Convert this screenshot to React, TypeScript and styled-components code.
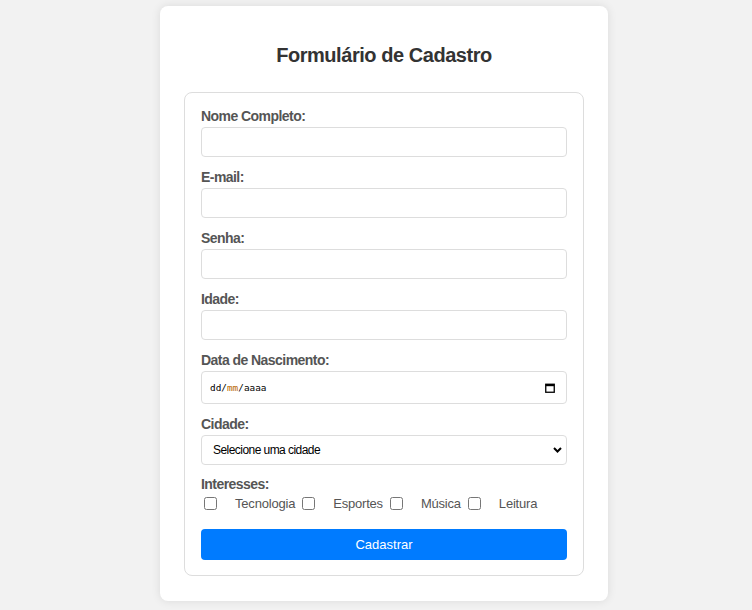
import styled, { createGlobalStyle } from "styled-components";

const GlobalStyle = createGlobalStyle`
    body {
        margin: 0;
        background-color: #f2f2f2;
        font-family: "Liberation Sans", Arial, sans-serif;
    }
`;

export default function App() {
    const textFields = [
        { id: "nome", label: "Nome Completo:", type: "text" },
        { id: "email", label: "E-mail:", type: "email" },
        { id: "senha", label: "Senha:", type: "password" },
        { id: "idade", label: "Idade:", type: "number" },
    ];

    const interesses = ["Tecnologia", "Esportes", "Música", "Leitura"];

    return (
        <Page>
            <GlobalStyle />
            <Card>
                <Title>Formulário de Cadastro</Title>
                <Form onSubmit={e => e.preventDefault()}>
                    {
                        textFields.map(field => (
                            <div key={field.id}>
                                <Label htmlFor={field.id}>{field.label}</Label>
                                <Input id={field.id} type={field.type} />
                            </div>
                        ))
                    }

                    <Label htmlFor="nascimento">Data de Nascimento:</Label>
                    <DateField id="nascimento" tabIndex={0}>
                        <DateText>
                            dd/<Month>mm</Month>/aaaa
                        </DateText>
                        <svg width="10" height="10" viewBox="0 0 10 10">
                            <rect x="0.75" y="1.25" width="8.5" height="8" fill="none" stroke="#000" strokeWidth="1.3" />
                            <rect x="0.75" y="1" width="8.5" height="2.2" fill="#000" />
                        </svg>
                    </DateField>

                    <Label htmlFor="cidade">Cidade:</Label>
                    <SelectWrap>
                        <Select id="cidade" defaultValue="">
                            <option value="">Selecione uma cidade</option>
                            <option value="sp">São Paulo</option>
                            <option value="rj">Rio de Janeiro</option>
                            <option value="bh">Belo Horizonte</option>
                        </Select>
                        <Chevron width="9" height="6" viewBox="0 0 9 6">
                            <path d="M1 1 L4.5 4.5 L8 1" fill="none" stroke="#000" strokeWidth="2" />
                        </Chevron>
                    </SelectWrap>

                    <Label>Interesses:</Label>
                    <CheckRow>
                        {
                            interesses.map(item => (
                                <CheckItem key={item}>
                                    <Checkbox type="checkbox" value={item} />
                                    <CheckText>{item}</CheckText>
                                </CheckItem>
                            ))
                        }
                    </CheckRow>

                    <Button type="submit">Cadastrar</Button>
                </Form>
            </Card>
        </Page>
    );
}

const Page = styled.div`
    display: flex;
    justify-content: center;
    align-items: flex-start;
    min-height: 100vh;
    padding: 6px 0 0 16px;
    box-sizing: border-box;
`;

const Card = styled.div`
    width: 448px;
    box-sizing: border-box;
    padding: 24px 24px 25px;
    background-color: #fff;
    border-radius: 8px;
    box-shadow: 0 0 10px rgba(0, 0, 0, 0.1);
`;

const Title = styled.h2`
    margin: 14px 0 25px;
    font-size: 20px;
    line-height: 23px;
    letter-spacing: -0.45px;
    text-align: center;
    color: #333;
`;

const Form = styled.form`
    display: flex;
    flex-direction: column;
    padding: 15px 16px;
    border: 1px solid #ddd;
    border-radius: 8px;
`;

const Label = styled.label`
    display: block;
    margin-bottom: 3px;
    font-size: 14px;
    line-height: 16px;
    font-weight: bold;
    letter-spacing: -0.55px;
    color: #555;
`;

const Input = styled.input`
    display: block;
    width: 100%;
    height: 30px;
    box-sizing: border-box;
    margin: 0 0 12px;
    padding: 6px 8px;
    border: 1px solid #ddd;
    border-radius: 4px;
    font-size: 14px;
    outline: none;
`;

const DateField = styled.div`
    display: flex;
    align-items: center;
    justify-content: space-between;
    height: 33px;
    box-sizing: border-box;
    margin-bottom: 12px;
    padding: 0 11px 0 8px;
    border: 1px solid #ddd;
    border-radius: 4px;
    background-color: #fff;
`;

const DateText = styled.span`
    font-family: "DejaVu Sans Mono", "Liberation Mono", monospace;
    font-size: 9.4px;
    color: #000;
`;

const Month = styled.span`
    color: #b86800;
`;

const SelectWrap = styled.div`
    position: relative;
    margin-bottom: 11px;
`;

const Select = styled.select`
    display: block;
    width: 100%;
    height: 30px;
    box-sizing: border-box;
    margin: 0;
    padding: 0 24px 0 11px;
    border: 1px solid #ddd;
    border-radius: 4px;
    background-color: #fff;
    appearance: none;
    font-family: "Liberation Sans", Arial, sans-serif;
    font-size: 12px;
    letter-spacing: -0.55px;
    color: #000;
    outline: none;
`;

const Chevron = styled.svg`
    position: absolute;
    right: 5px;
    top: 12px;
    pointer-events: none;
`;

const CheckRow = styled.div`
    display: flex;
    flex-wrap: wrap;
    align-items: center;
    height: 16px;
`;

const CheckItem = styled.label`
    display: flex;
    align-items: center;
`;

const Checkbox = styled.input`
    width: 13px;
    height: 13px;
    margin: 0 18px 0 3px;
`;

const CheckText = styled.span`
    margin-right: 4px;
    font-size: 13px;
    letter-spacing: -0.2px;
    color: #555;
`;

const Button = styled.button`
    height: 31px;
    margin-top: 18px;
    padding: 0;
    border: none;
    border-radius: 4px;
    background-color: #007bff;
    color: #fff;
    font-family: "Liberation Sans", Arial, sans-serif;
    font-size: 13px;
    cursor: pointer;
    &:hover {
        background-color: #0069d9;
    }
`;
